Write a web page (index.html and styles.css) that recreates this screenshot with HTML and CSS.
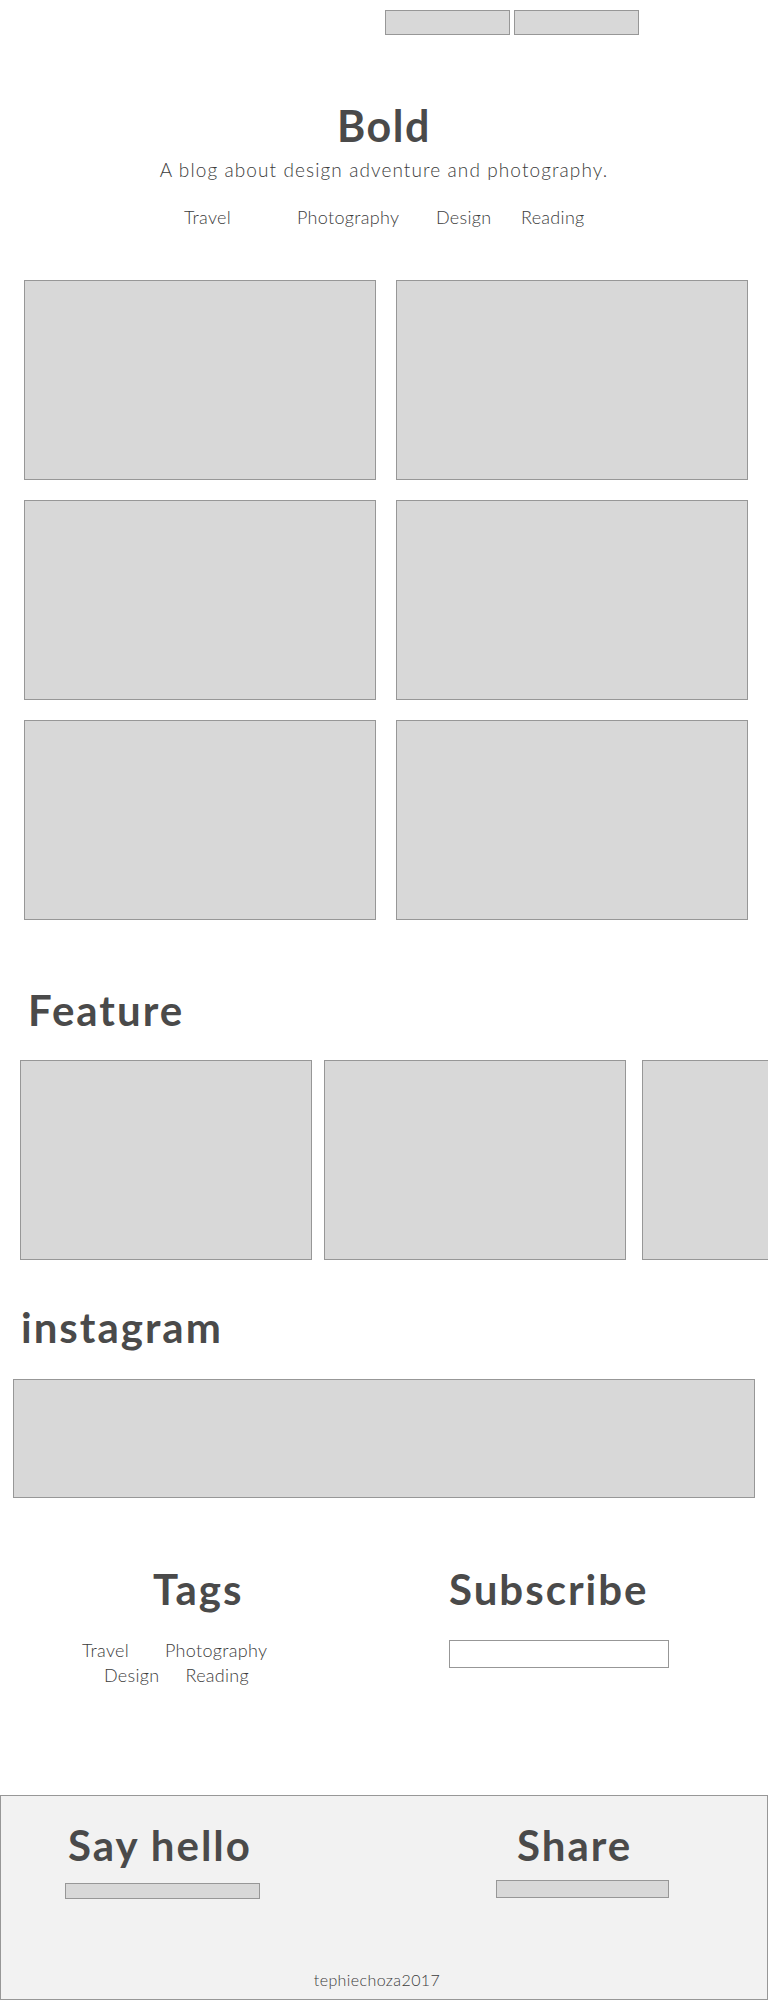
FILE: index.html
```html
<!DOCTYPE html>
<html lang="en">
<head>
<meta charset="utf-8">
<title>Bold</title>
<link rel="stylesheet" href="styles.css">
</head>
<body>
<div class="topbar">
  <div class="topbtn"></div>
  <div class="topbtn"></div>
</div>

<header class="masthead">
  <h1 class="site-title">Bold</h1>
  <p class="tagline">A blog about design adventure and photography.</p>
  <nav class="nav">
    <span>Travel</span>
    <span>Photography</span>
    <span>Design</span>
    <span>Reading</span>
  </nav>
</header>

<section class="posts">
  <div class="ph"></div>
  <div class="ph"></div>
  <div class="ph"></div>
  <div class="ph"></div>
  <div class="ph"></div>
  <div class="ph"></div>
</section>

<h2 class="section-title feature-title">Feature</h2>
<div class="feature-row">
  <div class="ph feat feat-1"></div>
  <div class="ph feat feat-2"></div>
  <div class="ph feat feat-3"></div>
</div>

<h2 class="section-title insta-title">instagram</h2>
<div class="ph insta"></div>

<section class="widgets">
  <div class="tags">
    <h2 class="section-title tags-title">Tags</h2>
    <div class="tag-row tag-row-1"><span>Travel</span><span>Photography</span></div>
    <div class="tag-row tag-row-2"><span>Design</span><span>Reading</span></div>
  </div>
  <div class="subscribe">
    <h2 class="section-title sub-title">Subscribe</h2>
    <div class="sub-input"></div>
  </div>
</section>

<footer class="footer">
  <div class="footer-cols">
    <div class="hello">
      <h2 class="section-title hello-title">Say hello</h2>
      <div class="ph hello-bar"></div>
    </div>
    <div class="share">
      <h2 class="section-title share-title">Share</h2>
      <div class="ph share-bar"></div>
    </div>
  </div>
  <p class="copyright">tephiechoza2017</p>
</footer>
</body>
</html>
```

FILE: styles.css
```css
* { box-sizing: border-box; }

body {
  margin: 0;
  background: #ffffff;
  color: #4a4a4a;
  font-family: Lato, "Noto Sans", sans-serif;
  width: 768px;
  overflow-x: hidden;
}

h1, h2, p { margin: 0; }

.ph {
  background: #d8d8d8;
  border: 1px solid #979797;
}

/* top bar */
.topbar {
  display: flex;
  gap: 4px;
  padding: 10px 0 0 385px;
}
.topbtn {
  width: 125px;
  height: 25px;
  background: #d8d8d8;
  border: 1px solid #979797;
}

/* masthead */
.masthead { text-align: center; }
.site-title {
  margin-top: 65px;
  font-size: 43px;
  font-weight: 700;
  line-height: 1.2;
  letter-spacing: 1.5px;
}
.tagline {
  margin-top: 7px;
  font-size: 19px;
  font-weight: 300;
  line-height: 1.2;
  letter-spacing: 1.1px;
  color: #3c3c3c;
}
.nav {
  margin-top: 26px;
  display: grid;
  grid-template-columns: 113px 139px 85px auto;
  padding-left: 184px;
  text-align: left;
  font-size: 18px;
  font-weight: 300;
  line-height: 1.2;
  letter-spacing: 0.3px;
  color: #3c3c3c;
}

/* posts grid */
.posts {
  margin: 51px 0 0 24px;
  display: grid;
  grid-template-columns: 352px 352px;
  grid-auto-rows: 200px;
  gap: 20px;
}

/* section headings */
.section-title {
  font-size: 42px;
  font-weight: 700;
  line-height: 1.2;
  letter-spacing: 2px;
}
.feature-title {
  margin-top: 65px;
  padding-left: 28px;
}
.feature-row {
  margin-top: 25px;
  display: flex;
  gap: 12px;
  padding-left: 20px;
  overflow: hidden;
}
.feat { height: 200px; flex: none; }
.feat-1 { width: 292px; }
.feat-2 { width: 302px; }
.feat-3 { width: 300px; margin-left: 4px; }

.insta-title {
  margin-top: 42px;
  padding-left: 21px;
}
.insta {
  margin: 26px 13px 0 13px;
  height: 119px;
}

/* tags & subscribe */
.widgets {
  display: flex;
  margin-top: 66px;
  height: 231px;
}
.tags { width: 449px; }
.tags-title { padding-left: 153px; }
.tag-row {
  display: flex;
  font-size: 18px;
  font-weight: 300;
  line-height: 25px;
  letter-spacing: 0.3px;
  color: #3c3c3c;
}
.tag-row-1 { margin-top: 24px; padding-left: 82px; gap: 36px; }
.tag-row-2 { padding-left: 104px; gap: 26px; }

.sub-title { padding-left: 0; }
.sub-input {
  margin-top: 26px;
  width: 220px;
  height: 28px;
  background: #ffffff;
  border: 1px solid #979797;
}

/* footer */
.footer {
  height: 205px;
  background: #f2f2f2;
  border: 1px solid #979797;
  display: flex;
  flex-direction: column;
  padding: 24px 0 10px 0;
}
.footer-cols { display: flex; }
.hello { width: 495px; padding-left: 64px; }
.hello-title { padding-left: 3px; }
.hello-bar {
  margin-top: 13px;
  width: 195px;
  height: 16px;
}
.share-title { padding-left: 21px; }
.share-bar {
  margin-top: 10px;
  width: 173px;
  height: 18px;
}
.copyright {
  margin-top: auto;
  text-align: center;
  padding-right: 14px;
  font-size: 16px;
  font-weight: 300;
  line-height: 1.2;
  letter-spacing: 0.4px;
  color: #3c3c3c;
}
```
